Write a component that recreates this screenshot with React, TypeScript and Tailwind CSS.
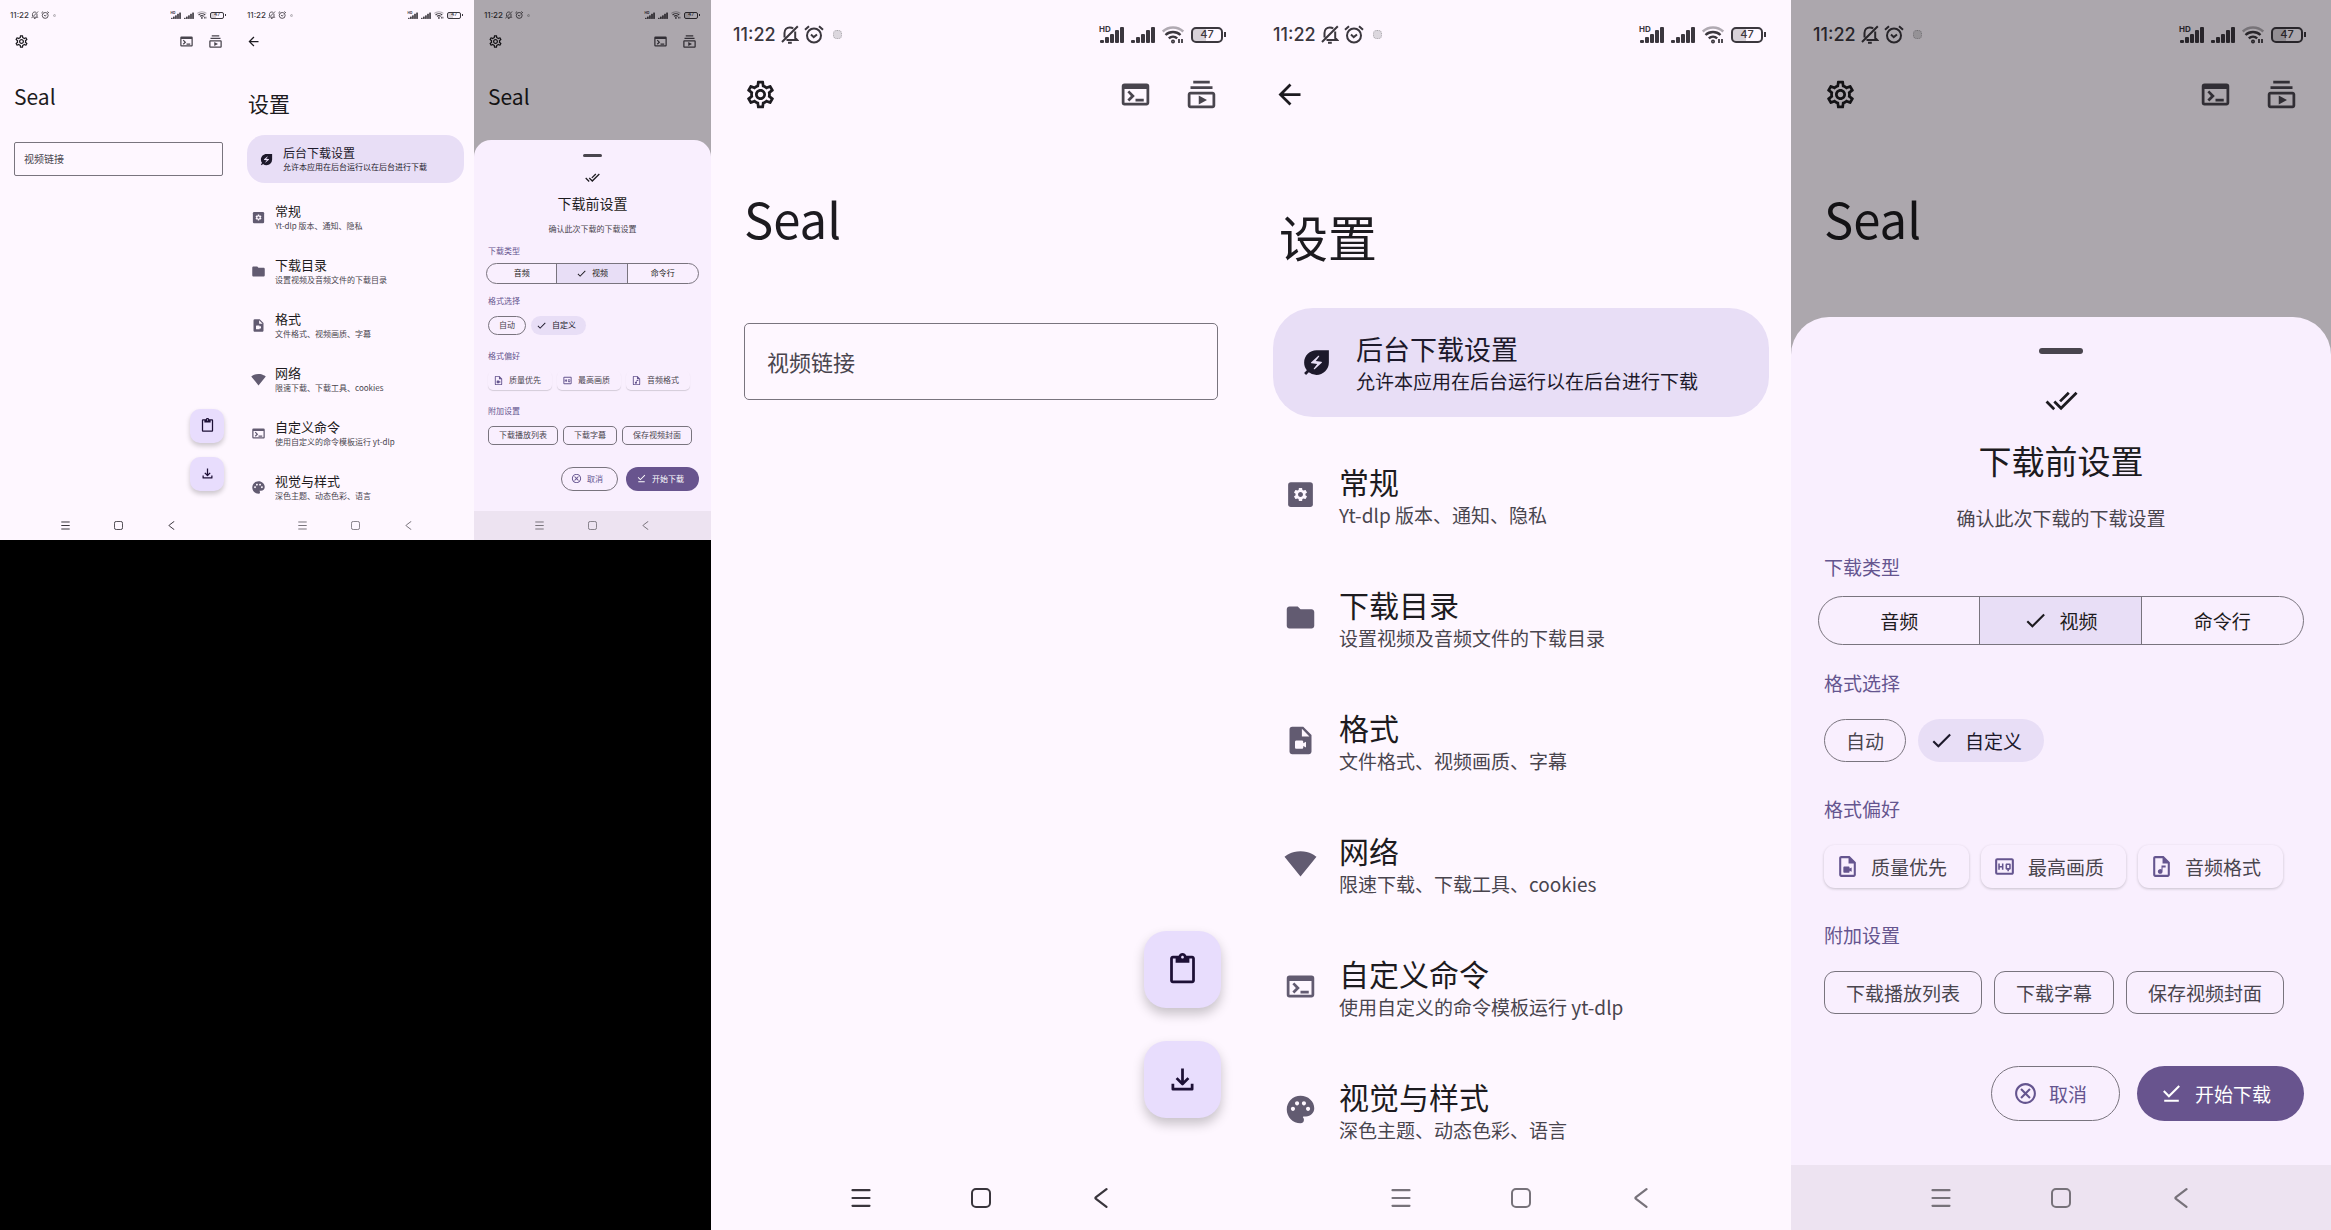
import type { ReactNode } from "react";
import type { IconType } from "react-icons";
import {
  MdArrowBack,
  MdCheck,
  MdContentPaste,
  MdDoneAll,
  MdDownloadDone,
  MdEnergySavingsLeaf,
  MdFolder,
  MdOutlineAudioFile,
  MdOutlineCancel,
  MdOutlineHighQuality,
  MdOutlineSettings,
  MdOutlineSubscriptions,
  MdOutlineTerminal,
  MdOutlineVideoFile,
  MdPalette,
  MdSettings,
  MdSignalWifi4Bar,
  MdVideoFile,
} from "react-icons/md";

// Every screen is a container: base classes are the thumbnail, @md: the full size.
const iconSize = "size-[15px] shrink-0 @md:size-[33px]";
const smallIconSize = "size-[11px] shrink-0 @md:size-[25px]";
const bodyText =
  "text-[8px] leading-[12px] @md:text-[19px] @md:leading-[28px]";
const headline =
  "text-[21px] leading-[26px] text-[#1d1b20] @md:text-[49px] @md:leading-[60px]";

type SettingsEntry = {
  title: string;
  description: string;
  icon: (props: { className?: string }) => ReactNode;
};

const settingsEntries: SettingsEntry[] = [
  {
    title: "常规",
    description: "Yt-dlp 版本、通知、隐私",
    icon: SettingsBoxIcon,
  },
  {
    title: "下载目录",
    description: "设置视频及音频文件的下载目录",
    icon: MdFolder,
  },
  {
    title: "格式",
    description: "文件格式、视频画质、字幕",
    icon: MdVideoFile,
  },
  {
    title: "网络",
    description: "限速下载、下载工具、cookies",
    icon: MdSignalWifi4Bar,
  },
  {
    title: "自定义命令",
    description: "使用自定义的命令模板运行 yt-dlp",
    icon: MdOutlineTerminal,
  },
  {
    title: "视觉与样式",
    description: "深色主题、动态色彩、语言",
    icon: MdPalette,
  },
];

function SettingsBoxIcon({ className }: { className?: string }) {
  return (
    <svg viewBox="0 0 24 24" fill="currentColor" className={className}>
      <rect x="3" y="3" width="18" height="18" rx="2" />
      <MdSettings x="6" y="6" size={12} color="#fef7ff" />
    </svg>
  );
}

function BellOffIcon() {
  return (
    <svg
      viewBox="0 0 18 19"
      fill="none"
      stroke="currentColor"
      strokeWidth="2"
      className="h-[8px] @md:h-[19px]"
    >
      <path d="M3.500 12.500V8c0-3.400 2.200-5.600 5.300-5.600 1.400 0 2.500.4 3.400 1.200M14.200 6.500V13l1.800 1.900H5.500M7 17.700h3.800M16.800 1.200 1 17" />
    </svg>
  );
}

function AlarmIcon() {
  return (
    <svg
      viewBox="0 0 20 19"
      fill="none"
      stroke="currentColor"
      strokeWidth="2"
      className="h-[8px] @md:h-[19px]"
    >
      <circle cx="10" cy="10.500" r="7" />
      <path d="M1 4.800 5 1.200M19 4.800 15 1.200M7 9.500l2.700 2.600L13 9.500" />
    </svg>
  );
}

function SignalIcon({ label }: { label?: string }) {
  return (
    <svg
      viewBox="0 0 24 17"
      fill="currentColor"
      className="h-[7px] overflow-visible @md:h-[17px]"
    >
      <rect x="0" y="14" width="4" height="3" rx="1" />
      <rect x="5" y="11" width="4" height="6" rx="1" />
      <rect x="10" y="8" width="4" height="9" rx="1" />
      <rect x="15" y="4" width="4" height="13" rx="1" />
      <rect x="20" y="1" width="4" height="16" rx="1" />
      {label && (
        <text
          x="-1"
          y="6"
          fontSize="8"
          fontWeight="700"
          className="font-[Inter]"
        >
          {label}
        </text>
      )}
    </svg>
  );
}

function WifiIcon() {
  return (
    <svg
      viewBox="0 0 22 18"
      fill="none"
      stroke="currentColor"
      strokeWidth="2.400"
      className="h-[8px] @md:h-[18px]"
    >
      <path d="M.8 5.500C6.500.2 15.500.2 21.200 5.500" opacity=".4" />
      <path d="M3.500 9c4.200-4 10.800-4 15 0M6.800 12.300c2.400-2.200 6-2.200 8.400 0" />
      <circle cx="11" cy="15.500" r=".8" />
      <path d="M17 13v4M20 13v4" strokeWidth="1.800" />
    </svg>
  );
}

function DownloadIcon() {
  return (
    <svg
      viewBox="0 0 24 24"
      fill="none"
      stroke="currentColor"
      strokeWidth="2"
      strokeLinejoin="round"
      className={iconSize}
    >
      <path d="M12 4v11M7.700 11l4.300 4.300 4.300-4.300M5 15v4h14v-4" />
    </svg>
  );
}

function StatusBar() {
  return (
    <div className="flex h-[27px] shrink-0 items-center justify-between pt-[3px] pr-[11px] pl-[10px] text-[#3b373e] @md:h-[61px] @md:pt-[8px] @md:pr-[25px] @md:pl-[22px]">
      <div className="flex items-center gap-[2px] @md:gap-[5px]">
        <span className="font-[Inter] text-[8px] font-medium @md:text-[18px]">
          11:22
        </span>
        <BellOffIcon />
        <AlarmIcon />
        <span className="ml-[2px] size-[3px] rounded-sm border border-dotted border-[#aaa6ac] bg-[#dcd7de] @md:ml-[4px] @md:size-[9px]" />
      </div>
      <div className="flex items-center gap-[3px] @md:gap-[7px]">
        <SignalIcon label="HD" />
        <SignalIcon />
        <WifiIcon />
        <div className="flex items-center gap-px">
          <span className="flex h-[7px] w-[14px] items-center justify-center rounded-xs border border-current bg-linear-to-r from-black/15 from-45% to-transparent to-45% font-[Inter] text-[5px] font-medium @md:h-[16px] @md:w-[32px] @md:rounded-[5px] @md:border-2 @md:text-[11px]">
            47
          </span>
          <span className="h-[2px] w-px bg-current @md:h-[5px] @md:w-[2px]" />
        </div>
      </div>
    </div>
  );
}

function NavigationBar({ className }: { className: string }) {
  const button =
    "flex h-full w-[53px] items-center justify-center @md:w-[120px]";
  const icon = "size-[9px] @md:size-[20px]";
  return (
    <nav
      className={`flex h-[29px] shrink-0 items-center justify-center @md:h-[65px] ${className}`}
    >
      <button aria-label="菜单" className={button}>
        <svg
          viewBox="0 0 20 20"
          stroke="currentColor"
          strokeWidth="2.200"
          strokeLinecap="round"
          className={icon}
        >
          <path d="M1.500 2.200h17M1.500 10h17M1.500 17.800h17" />
        </svg>
      </button>
      <button aria-label="主页" className={button}>
        <svg
          viewBox="0 0 20 20"
          fill="none"
          stroke="currentColor"
          strokeWidth="2"
          className={icon}
        >
          <rect x="1" y="1" width="18" height="18" rx="4" />
        </svg>
      </button>
      <button aria-label="返回" className={button}>
        <svg
          viewBox="0 0 20 20"
          fill="none"
          stroke="currentColor"
          strokeWidth="2.200"
          strokeLinecap="round"
          className={icon}
        >
          <path d="M15.500 1.200 5 9.100q-1.200.9 0 1.800l10.500 7.900" />
        </svg>
      </button>
    </nav>
  );
}

function Screen({ children }: { children: ReactNode }) {
  return (
    <section className="@container relative flex aspect-[18/41] min-w-0 flex-col overflow-hidden bg-[#fef7ff]">
      {children}
    </section>
  );
}

function HeaderButton({ label, icon: Icon }: { label: string; icon: IconType }) {
  return (
    <button
      aria-label={label}
      className="flex size-[29px] items-center justify-center @md:size-[66px]"
    >
      <Icon className={iconSize} />
    </button>
  );
}

function HomeContent() {
  return (
    <>
      <StatusBar />
      <header className="flex h-[29px] shrink-0 items-center px-[7px] text-[#49454e] @md:h-[66px] @md:pr-[17px] @md:pl-[16px]">
        <div className="flex-1 text-[#1d1b20]">
          <HeaderButton label="设置" icon={MdOutlineSettings} />
        </div>
        <HeaderButton label="终端" icon={MdOutlineTerminal} />
        <HeaderButton label="下载列表" icon={MdOutlineSubscriptions} />
      </header>
      <h1
        className={`mt-[27px] px-[14px] @md:mt-[61px] @md:px-[33px] ${headline}`}
      >
        Seal
      </h1>
      <div className="mt-[33px] px-[14px] @md:mt-[75px] @md:px-[33px]">
        <input
          type="text"
          aria-label="视频链接"
          placeholder="视频链接"
          className="block h-[34px] w-full rounded-xs border border-[#79747e] bg-transparent px-[9px] pb-px text-[10px] placeholder:text-[#49454e] @md:h-[77px] @md:rounded-[5px] @md:px-[22px] @md:pb-[2px] @md:text-[22px]"
        />
      </div>
    </>
  );
}

function HomeScreen() {
  const fab =
    "flex size-[34px] items-center justify-center rounded-[10px] bg-[#e8ddfd] shadow-[0_3px_5px_rgba(0,0,0,0.2)] @md:size-[77px] @md:rounded-[22px] @md:shadow-[0_6px_12px_rgba(0,0,0,0.22)]";
  return (
    <Screen>
      <HomeContent />
      <div className="mt-auto flex flex-col items-end gap-[14px] pr-[13px] pb-[20px] text-[#1d1036] @md:gap-[33px] @md:pr-[30px] @md:pb-[47px]">
        <button aria-label="粘贴" className={fab}>
          <MdContentPaste className={iconSize} />
        </button>
        <button aria-label="下载" className={fab}>
          <DownloadIcon />
        </button>
      </div>
      <NavigationBar className="text-[#39353c]" />
    </Screen>
  );
}

function SettingsItem({ entry }: { entry: SettingsEntry }) {
  const Icon = entry.icon;
  return (
    <li>
      <button className="flex h-[54px] w-full items-center gap-[9px] pl-[14px] text-left @md:h-[123px] @md:gap-[22px] @md:pl-[33px]">
        <Icon className={`text-[#625b71] ${iconSize}`} />
        <span className="flex flex-col">
          <span className="text-[13px] leading-[18px] text-[#1d1b20] @md:text-[30px] @md:leading-[40px]">
            {entry.title}
          </span>
          <span className={`text-[#49454e] ${bodyText}`}>
            {entry.description}
          </span>
        </span>
      </button>
    </li>
  );
}

function SettingsScreen() {
  return (
    <Screen>
      <StatusBar />
      <header className="flex h-[29px] shrink-0 items-center px-[2px] text-[#1d1b20] @md:h-[66px] @md:px-[5px]">
        <HeaderButton label="返回" icon={MdArrowBack} />
      </header>
      <h1
        className={`mt-[34px] px-[11px] @md:mt-[79px] @md:px-[28px] ${headline}`}
      >
        设置
      </h1>
      <button className="mx-[10px] mt-[19px] flex h-[48px] shrink-0 items-center gap-[9px] rounded-[18px] bg-[#e8def6] pl-[12px] text-left text-[#1d192b] @md:mx-[22px] @md:mt-[42px] @md:h-[109px] @md:gap-[23px] @md:rounded-[40px] @md:pl-[27px]">
        <MdEnergySavingsLeaf className={iconSize} />
        <span className="flex flex-col">
          <span className="text-[12px] leading-[16px] @md:text-[27px] @md:leading-[36px]">
            后台下载设置
          </span>
          <span className={bodyText}>允许本应用在后台运行以在后台进行下载</span>
        </span>
      </button>
      <ul className="mt-[7px] min-h-0 flex-1 overflow-hidden @md:mt-[16px]">
        {settingsEntries.map((entry) => (
          <SettingsItem key={entry.title} entry={entry} />
        ))}
      </ul>
      <NavigationBar className="text-[#77727a]" />
    </Screen>
  );
}

function SectionLabel({ children }: { children: ReactNode }) {
  return (
    <h3 className={`px-[14px] text-[#65558f] @md:px-[33px] ${bodyText}`}>
      {children}
    </h3>
  );
}

function ChipRow({ children }: { children: ReactNode }) {
  return (
    <div className="mt-[9px] flex gap-[5px] px-[14px] @md:mt-[22px] @md:gap-[12px] @md:px-[33px]">
      {children}
    </div>
  );
}

function OutlinedChip({
  children,
  className = "rounded-[5px] @md:rounded-[11px]",
}: {
  children: ReactNode;
  className?: string;
}) {
  return (
    <button
      className={`flex h-[19px] items-center border border-[#79747e] px-[10px] whitespace-nowrap text-[#49454e] @md:h-[43px] @md:px-[21px] ${bodyText} ${className}`}
    >
      {children}
    </button>
  );
}

function IconChip({
  icon: Icon,
  children,
}: {
  icon: IconType;
  children: ReactNode;
}) {
  return (
    <button
      className={`flex h-[19px] items-center gap-[5px] rounded-[5px] pr-[11px] pl-[5px] whitespace-nowrap text-[#49454e] shadow-[0_1px_1px_rgba(0,0,0,0.15)] @md:h-[43px] @md:gap-[11px] @md:rounded-[11px] @md:pr-[22px] @md:pl-[11px] @md:shadow-[0_1px_3px_rgba(0,0,0,0.2)] ${bodyText}`}
    >
      <Icon className={`text-[#65558f] ${smallIconSize}`} />
      {children}
    </button>
  );
}

function DownloadSheet() {
  const segment = "flex items-center justify-center";
  const action =
    "flex h-[24px] items-center gap-[5px] rounded-full whitespace-nowrap @md:h-[55px] @md:gap-[11px]";
  return (
    <div className="absolute inset-0 flex flex-col justify-end bg-black/32">
      <div className="flex flex-col rounded-t-[17px] bg-[#f9effe] pt-[14px] @md:rounded-t-[38px] @md:pt-[31px]">
        <span className="h-[3px] w-[19px] self-center rounded-full bg-[#49454e] @md:h-[6px] @md:w-[44px]" />
        <MdDoneAll
          className={`mt-[13px] self-center text-[#1d1b20] @md:mt-[30px] ${iconSize}`}
        />
        <h2 className="mt-[9px] text-center text-[14px] leading-[18px] text-[#1d1b20] @md:mt-[23px] @md:text-[33px] @md:leading-[40px]">
          下载前设置
        </h2>
        <p
          className={`mt-[11px] mb-[10px] text-center text-[#49454e] @md:mt-[24px] @md:mb-[21px] ${bodyText}`}
        >
          确认此次下载的下载设置
        </p>

        <SectionLabel>下载类型</SectionLabel>
        <div
          className={`mx-[12px] mt-[6px] mb-[11px] grid h-[21px] grid-cols-3 divide-x divide-[#79747e] overflow-hidden rounded-full border border-[#79747e] text-[#1d1b20] @md:mx-[27px] @md:mt-[15px] @md:mb-[24px] @md:h-[49px] ${bodyText}`}
        >
          <button className={segment}>音频</button>
          <button
            aria-pressed="true"
            className={`gap-[5px] bg-[#e8def6] @md:gap-[11px] ${segment}`}
          >
            <MdCheck className={smallIconSize} />
            视频
          </button>
          <button className={segment}>命令行</button>
        </div>

        <SectionLabel>格式选择</SectionLabel>
        <ChipRow>
          <OutlinedChip className="rounded-full">自动</OutlinedChip>
          <button
            aria-pressed="true"
            className={`flex h-[19px] items-center gap-[5px] rounded-full bg-[#e8def6] pr-[10px] pl-[5px] text-[#1d192b] @md:h-[43px] @md:gap-[11px] @md:pr-[22px] @md:pl-[11px] ${bodyText}`}
          >
            <MdCheck className={smallIconSize} />
            自定义
          </button>
        </ChipRow>

        <div className="mt-[15px] @md:mt-[33px]">
          <SectionLabel>格式偏好</SectionLabel>
          <ChipRow>
            <IconChip icon={MdOutlineVideoFile}>质量优先</IconChip>
            <IconChip icon={MdOutlineHighQuality}>最高画质</IconChip>
            <IconChip icon={MdOutlineAudioFile}>音频格式</IconChip>
          </ChipRow>
        </div>

        <div className="mt-[15px] @md:mt-[33px]">
          <SectionLabel>附加设置</SectionLabel>
          <ChipRow>
            <OutlinedChip>下载播放列表</OutlinedChip>
            <OutlinedChip>下载字幕</OutlinedChip>
            <OutlinedChip>保存视频封面</OutlinedChip>
          </ChipRow>
        </div>

        <div
          className={`mt-[22px] mb-[20px] flex justify-end gap-[8px] px-[12px] @md:mt-[52px] @md:mb-[44px] @md:gap-[17px] @md:px-[27px] ${bodyText}`}
        >
          <button
            className={`border border-[#79747e] pr-[14px] pl-[9px] text-[#65558f] @md:pr-[32px] @md:pl-[21px] ${action}`}
          >
            <MdOutlineCancel className={smallIconSize} />
            取消
          </button>
          <button
            className={`bg-[#68548e] pr-[15px] pl-[10px] text-white @md:pr-[33px] @md:pl-[22px] ${action}`}
          >
            <MdDownloadDone className={smallIconSize} />
            开始下载
          </button>
        </div>
        <NavigationBar className="bg-[#ede3f1] text-[#77727a]" />
      </div>
    </div>
  );
}

function DownloadScreen() {
  return (
    <Screen>
      <HomeContent />
      <DownloadSheet />
    </Screen>
  );
}

function ScreenStrip() {
  return (
    <div className="grid grid-cols-3">
      <HomeScreen />
      <SettingsScreen />
      <DownloadScreen />
    </div>
  );
}

export default function App() {
  return (
    <main className="grid min-h-screen grid-cols-[711fr_1620fr] items-start bg-black font-['Noto_Sans_CJK_SC',sans-serif]">
      <ScreenStrip />
      <ScreenStrip />
    </main>
  );
}
